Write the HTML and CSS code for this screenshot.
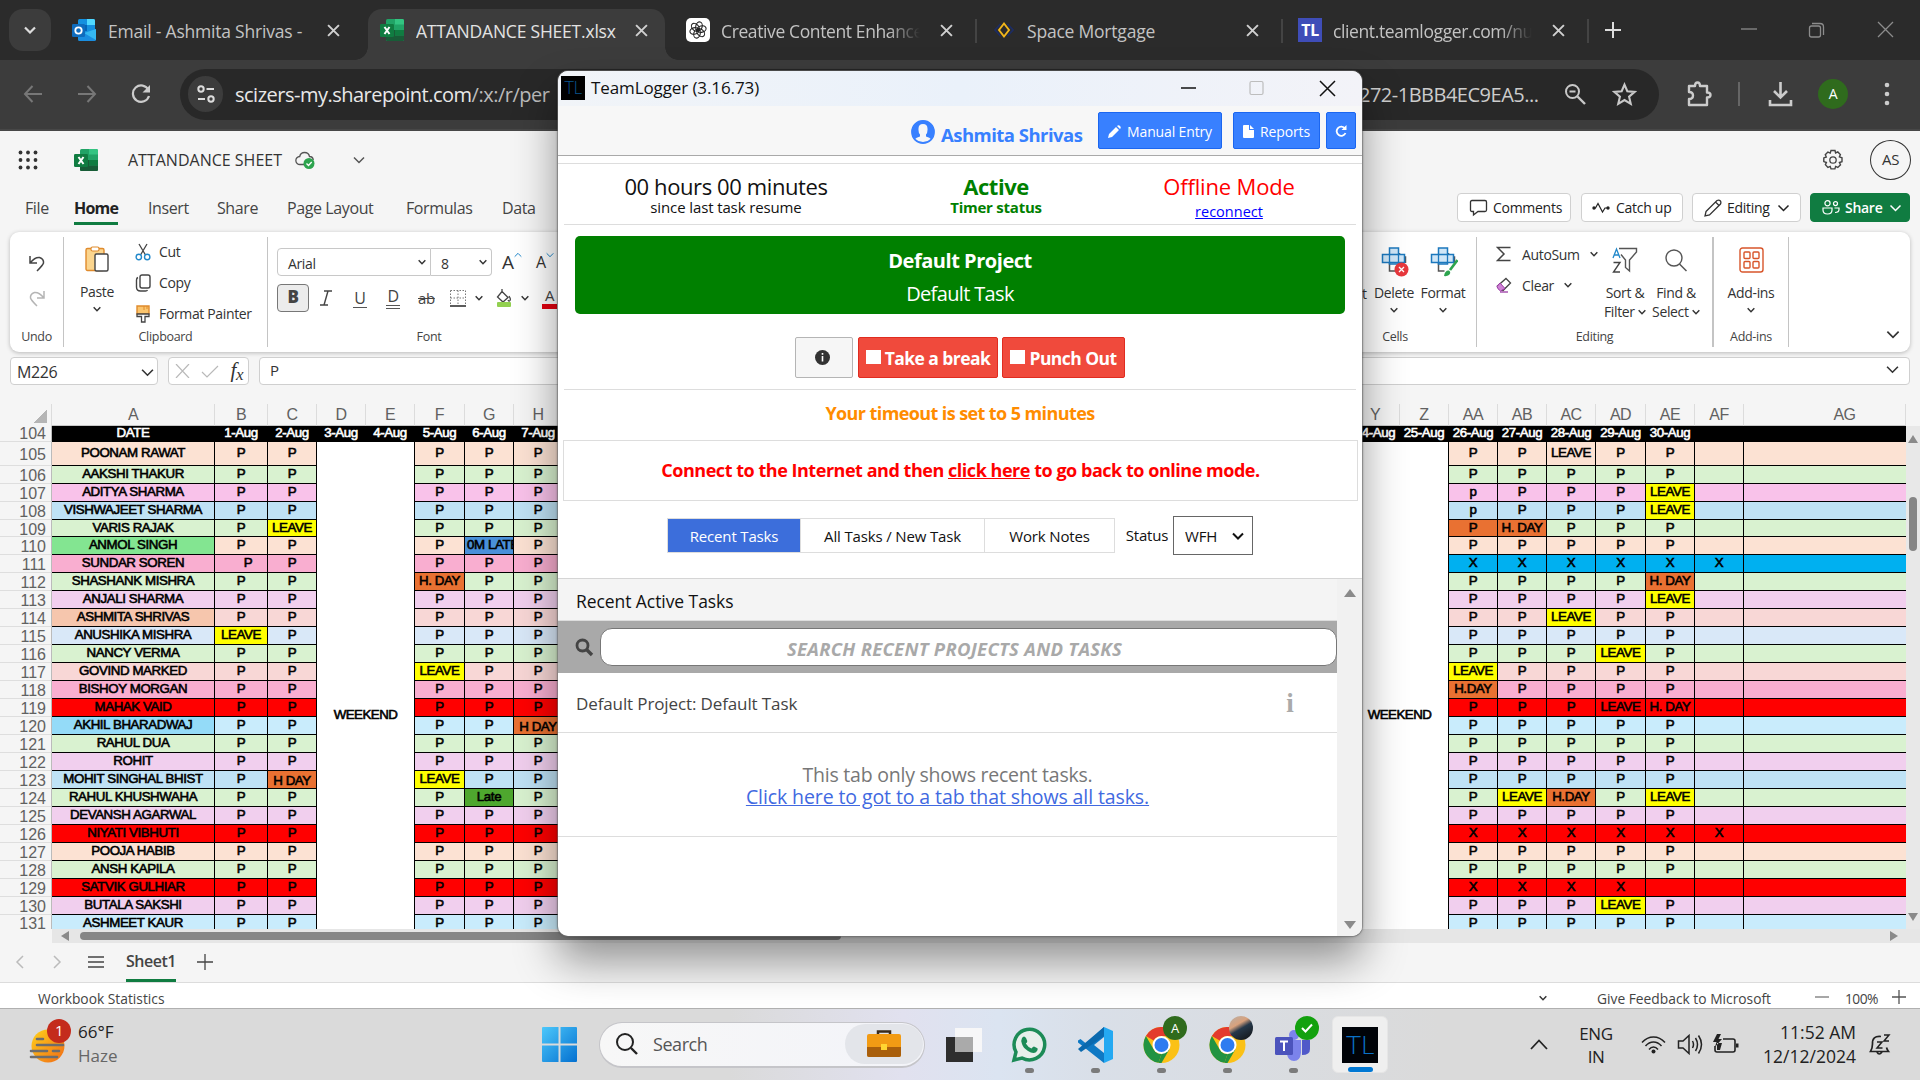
FILE: index.html
```html
<!DOCTYPE html>
<html lang="en">
<head>
<meta charset="utf-8">
<title>ATTANDANCE SHEET.xlsx</title>
<link rel="stylesheet" href="styles.css">
</head>
<body>
<svg class="defs" width="0" height="0">
  <symbol id="chev" viewBox="0 0 12 8"><path d="M1 1.500l5 5 5-5" fill="none" stroke="currentColor"/></symbol>
  <symbol id="x" viewBox="0 0 12 12"><path d="M1 1l10 10M11 1L1 11" fill="none" stroke="currentColor" stroke-width="1.800"/></symbol>
  <symbol id="excel" viewBox="0 0 24 22">
    <rect x="6" width="18" height="22" rx="1.500" fill="#21a366"/><path d="M6 11h9v11H7.500q-1.500 0-1.500-1.500z" fill="#185c37"/><path d="M15 11h9v5.500h-9z" fill="#107c41"/><path d="M15 16.500h9v4q0 1.500-1.500 1.500H15z" fill="#185c37"/><path d="M15 0h7.500Q24 0 24 1.500v4h-9z" fill="#33c481"/>
    <rect y="5" width="14" height="13" rx="1.300" fill="#107c41"/><path d="M4.500 8l5 7M9.500 8l-5 7" stroke="#fff" stroke-width="2"/>
  </symbol>
  <symbol id="chrome" viewBox="0 0 36 36">
    <circle cx="18" cy="18" r="18" fill="#fbc116"/><path d="M2.400 9A18 18 0 0 1 33.600 9H18a9 9 0 0 0-7.800 4.500z" fill="#e33b2e"/><path d="M2.400 9l7.800 13.500A9 9 0 0 0 18 27l-3 8.800A18 18 0 0 1 2.400 9z" fill="#229342"/><path d="M25.800 22.500L18 36q-2 0-3-.3l3-8.700z" fill="#229342"/>
    <circle cx="18" cy="18" r="9" fill="#fff"/><circle cx="18" cy="18" r="7" fill="#2f7cf0"/>
  </symbol>
  <symbol id="plusgrid" viewBox="0 0 26 28">
    <path d="M8 14v10h6M18 6v4h6v6" fill="none" stroke="#555" stroke-width="1.500"/>
    <path d="M8 1h9v6.500h6v8h-6V17H8v-1.500H1v-8h7z" fill="#cfe6f7" stroke="#1c78bd" stroke-width="1.500"/><path d="M8 7.500h9v8H8z" fill="none" stroke="#1c78bd" stroke-width="1.300"/>
  </symbol>
</svg>

<div class="screen">
  <header class="tabstrip">
    <span class="tabsearch"><svg width="12" height="8"><use href="#chev"/></svg></span>
    <div class="tab tab-mail">
      <svg class="fav" viewBox="0 0 24 22"><rect x="6" width="17" height="18" rx="1.500" fill="#1490df"/><path d="M15 0h6.500Q23 0 23 1.500V6h-8z" fill="#50d9ff"/><path d="M6 6h9v6H6z" fill="#0364b8"/><path d="M6 10l9 6 9-6v10.500q0 1.500-1.500 1.500h-15Q6 22 6 20.500z" fill="#1a8ee0"/><path d="M24 10v11L12 14z" fill="#35b8f1"/><rect y="5" width="13" height="13" rx="1.300" fill="#0f6cbd"/><circle cx="6.500" cy="11.500" r="3.200" fill="none" stroke="#fff" stroke-width="1.800"/></svg>
      <span class="tabtitle">Email - Ashmita Shrivas -</span><svg class="tx"><use href="#x"/></svg>
    </div>
    <div class="tab tab-active">
      <svg class="fav"><use href="#excel"/></svg>
      <span class="tabtitle">ATTANDANCE SHEET.xlsx</span><svg class="tx"><use href="#x"/></svg>
    </div>
    <div class="tab tab-gpt">
      <svg class="fav fav-sq" viewBox="0 0 24 24"><rect width="24" height="24" rx="5" fill="#fff"/><g fill="none" stroke="#222" stroke-width="1.100"><ellipse cx="12" cy="8.300" rx="3.200" ry="4.600" transform="rotate(15 12 12)"/><ellipse cx="12" cy="8.300" rx="3.200" ry="4.600" transform="rotate(75 12 12)"/><ellipse cx="12" cy="8.300" rx="3.200" ry="4.600" transform="rotate(135 12 12)"/><ellipse cx="12" cy="8.300" rx="3.200" ry="4.600" transform="rotate(195 12 12)"/><ellipse cx="12" cy="8.300" rx="3.200" ry="4.600" transform="rotate(255 12 12)"/><ellipse cx="12" cy="8.300" rx="3.200" ry="4.600" transform="rotate(315 12 12)"/></g></svg>
      <span class="tabtitle fade">Creative Content Enhance</span><svg class="tx"><use href="#x"/></svg>
    </div>
    <div class="tab tab-space">
      <svg class="fav fav-sq" viewBox="0 0 24 24"><path d="M8.500 6L3 12l5.500 6M15.500 6l5.500 6-5.500 6" fill="none" stroke="#1c2c63" stroke-width="1.800"/><path d="M12 5.500l5 6.500-5 6.500L7 12z" fill="none" stroke="#f2b61b" stroke-width="1.900"/></svg>
      <span class="tabtitle">Space Mortgage</span><svg class="tx"><use href="#x"/></svg>
    </div>
    <div class="tab tab-tl">
      <span class="tlfav">TL</span>
      <span class="tabtitle fade">client.teamlogger.com/nu</span><svg class="tx"><use href="#x"/></svg>
    </div>
    <svg class="newtab" viewBox="0 0 18 18"><path d="M9 1v16M1 9h16" stroke="#ddd" stroke-width="2"/></svg>
    <svg class="winctl" viewBox="0 0 160 20"><g fill="none" stroke="#8c8c8c" stroke-width="1.300"><path d="M2 9h16"/><rect x="70.500" y="6" width="11" height="11" rx="2"/><path d="M73 3.500h8q3.500 0 3.500 3.500v8"/><path d="M139 2l15 15M154 2l-15 15"/></g></svg>
  </header>

  <nav class="toolbar">
    <svg class="nav-ic dim" viewBox="0 0 20 20"><path d="M19 10H2M9.500 2L2 10l7.500 8" fill="none" stroke="currentColor" stroke-width="2"/></svg>
    <svg class="nav-ic dim" viewBox="0 0 20 20"><path d="M1 10h17M10.500 2L18 10l-7.500 8" fill="none" stroke="currentColor" stroke-width="2"/></svg>
    <svg class="nav-ic" viewBox="0 0 20 20"><path d="M17.500 6A8.200 8.200 0 1 0 18 12" fill="none" stroke="currentColor" stroke-width="2.200"/><path d="M19 1v7.500h-7.500z" fill="currentColor"/></svg>
    <div class="urlbar">
      <span class="tune"><svg width="20" height="20" viewBox="0 0 20 20"><g fill="none" stroke="#ddd" stroke-width="2"><circle cx="5" cy="5" r="2.700"/><path d="M10.500 5H18M2 15h7"/><circle cx="15" cy="15" r="2.700"/></g></svg></span>
      <span class="url-l">scizers-my.sharepoint.com<i>/:x:/r/per</i></span>
      <span class="url-r">272-1BBB4EC9EA5...</span>
      <svg class="u-zoom" viewBox="0 0 22 22"><g fill="none" stroke="#c8c8c8" stroke-width="2"><circle cx="8.500" cy="8.500" r="6.500"/><path d="M5.500 8.500h6"/><path d="M13.500 13.500L21 21" stroke-width="2.400"/></g></svg>
      <svg class="u-star" viewBox="0 0 24 24"><path d="M12 2.500l2.700 6.400 7 .6-5.300 4.600 1.600 6.900-6-3.700-6 3.700 1.600-6.900L2.300 9.500l7-.6z" fill="none" stroke="#c8c8c8" stroke-width="2"/></svg>
    </div>
    <svg class="t-ext" viewBox="0 0 26 26"><path d="M3 5h6q0-3.500 2.500-3.500T14 5h7v6.500q3.500 0 3.500 2.500T21 16.500V24H3v-6q4 0 4-3.500T3 11z" fill="none" stroke="#ccc" stroke-width="2.400" stroke-linejoin="round"/></svg>
    <span class="t-div"></span>
    <svg class="t-down" viewBox="0 0 24 26"><path d="M12 1v15M5.500 10l6.500 6.500 6.500-6.500M1.500 19v5h21v-5" fill="none" stroke="#ccc" stroke-width="2.600"/></svg>
    <span class="t-av">A</span>
    <svg class="t-dots" viewBox="0 0 6 24"><g fill="#ccc"><circle cx="3" cy="3" r="2.300"/><circle cx="3" cy="12" r="2.300"/><circle cx="3" cy="21" r="2.300"/></g></svg>
  </nav>

  <div class="titlerow">
    <svg class="waffle" viewBox="0 0 20 20"><g fill="#333"><circle cx="2.500" cy="2.500" r="1.900"/><circle cx="10" cy="2.500" r="1.900"/><circle cx="17.500" cy="2.500" r="1.900"/><circle cx="2.500" cy="10" r="1.900"/><circle cx="10" cy="10" r="1.900"/><circle cx="17.500" cy="10" r="1.900"/><circle cx="2.500" cy="17.500" r="1.900"/><circle cx="10" cy="17.500" r="1.900"/><circle cx="17.500" cy="17.500" r="1.900"/></g></svg>
    <svg class="xl"><use href="#excel"/></svg>
    <span class="docname">ATTANDANCE SHEET</span>
    <svg class="cloud" viewBox="0 0 20 18"><path d="M9 13.500H5a4 4 0 0 1-.300-8 5 5 0 0 1 9.800 0 4 4 0 0 1 3.800 3.500" fill="none" stroke="#555" stroke-width="1.300"/><circle cx="14" cy="12.500" r="5.500" fill="#2da44e"/><path d="M11.500 12.500l2 2 3.200-3.500" fill="none" stroke="#fff" stroke-width="1.300"/></svg>
    <svg class="doc-chev"><use href="#chev"/></svg>
    <svg class="gear" viewBox="0 0 22 22"><path d="M9 1.500h4l.6 2.400 2.200-1 2.600 2.700-1 2.200 2.600 1v3.900l-2.600.8 1.100 2.300-2.700 2.600-2.200-1-.7 2.500H9l-.8-2.500-2.300 1-2.500-2.700 1-2.200-2.600-.9V8.900l2.500-.9-1-2.300 2.600-2.600 2.300 1z" fill="none" stroke="#444" stroke-width="1.400"/><circle cx="11" cy="11" r="3.200" fill="none" stroke="#444" stroke-width="1.300"/></svg>
    <span class="as">AS</span>
  </div>

  <div class="menurow">
    <div class="menus"><span class="m-file">File</span><span class="m-home"><b>Home</b></span><span class="m-insert">Insert</span><span class="m-share">Share</span><span class="m-layout">Page Layout</span><span class="m-form">Formulas</span><span>Data</span></div>
    <div class="actions">
      <span class="btn b1"><svg width="19" height="18" viewBox="0 0 19 18"><path d="M3 1.500h13q1.500 0 1.500 1.500v8q0 1.500-1.500 1.500H9L4.500 16v-3.500H3Q1.500 12.500 1.500 11V3Q1.500 1.500 3 1.500z" fill="none" stroke="#333" stroke-width="1.300"/></svg>Comments</span>
      <span class="btn b2"><svg width="18" height="12" viewBox="0 0 18 12"><circle cx="2" cy="6" r="1.700" fill="#222"/><circle cx="16" cy="6" r="1.700" fill="#222"/><path d="M2 6h1.500L6 1.500 10.500 10 13 6h3" fill="none" stroke="#222" stroke-width="1.200"/></svg>Catch up</span>
      <span class="btn b3"><svg width="18" height="18" viewBox="0 0 18 18"><path d="M2 12.500L13 1.500q2-1 3.200.3t.3 3.200L5.500 16 1 17zM11.500 3L15 6.500" fill="none" stroke="#333" stroke-width="1.300"/></svg>Editing<svg width="13" height="8"><use href="#chev"/></svg></span>
      <span class="btn b4"><svg width="18" height="15" viewBox="0 0 18 15"><g fill="none" stroke="#fff" stroke-width="1.200"><circle cx="5.500" cy="3.200" r="2.600"/><path d="M1 8h9v2q0 4-4.500 4T1 10z"/><circle cx="13.500" cy="3.600" r="2"/><path d="M12.500 8H17v1.500q0 3-4 3"/></g></svg>Share<svg width="13" height="8"><use href="#chev"/></svg></span>
    </div>
  </div>

  <section class="ribbon">
    <div class="grp g-undo">
      <div class="body">
        <svg width="18" height="18" viewBox="0 0 18 18"><path d="M2 2v7h7M2.500 8.500Q7 3 11.500 3.500 16 5 15.500 9 15 11 9 17" fill="none" stroke="#444" stroke-width="1.500"/></svg>
        <svg width="18" height="18" viewBox="0 0 18 18"><path d="M16 2v7H9M15.500 8.500Q11 3 6.500 3.500 2 5 2.500 9 3 11 9 17" fill="none" stroke="#b5b5b5" stroke-width="1.500"/></svg>
      </div><label>Undo</label>
    </div>
    <div class="grp g-clip">
      <div class="body">
        <div class="big paste"><svg width="24" height="26" viewBox="0 0 24 26"><rect x="1" y="2.500" width="18" height="22" rx="1.500" fill="#fbd58e" stroke="#e08b2d" stroke-width="1.400"/><rect x="6" y="1" width="8" height="4" rx="1.500" fill="#fff" stroke="#e08b2d" stroke-width="1.200"/><rect x="10" y="8" width="13" height="17" rx="1.500" fill="#fff" stroke="#444" stroke-width="1.400"/></svg><span>Paste</span><svg class="c7"><use href="#chev"/></svg></div>
        <div class="stack">
          <span><svg width="16" height="18" viewBox="0 0 16 18"><path d="M4 1l6.500 11M12 1L5.500 12" stroke="#444" stroke-width="1.300"/><circle cx="3.800" cy="14" r="2.700" fill="none" stroke="#2188ca" stroke-width="1.400"/><circle cx="12.200" cy="14" r="2.700" fill="none" stroke="#2188ca" stroke-width="1.400"/></svg>Cut</span>
          <span><svg width="16" height="18" viewBox="0 0 16 18"><rect x="5" y="1" width="10" height="13" rx="2" fill="none" stroke="#444" stroke-width="1.400"/><path d="M3 3.500Q1.500 4 1.500 6v7q0 4 4 4h5q1.500 0 2-1" fill="none" stroke="#444" stroke-width="1.400"/></svg>Copy</span>
          <span><svg width="16" height="18" viewBox="0 0 16 18"><path d="M2 1h12v8H2z" fill="#fbc56d" stroke="#e08b2d" stroke-width="1.400"/><path d="M9 1v4M12 1v3" stroke="#e08b2d"/><path d="M2 9h12v2.500h-4V17H6.500v-5.500H2z" fill="#fff" stroke="#444" stroke-width="1.300"/></svg>Format Painter</span>
        </div>
      </div><label>Clipboard</label>
    </div>
    <div class="grp g-font">
      <div class="body fontbody">
        <div class="fr1"><span class="cb cb1">Arial<svg class="c7"><use href="#chev"/></svg></span><span class="cb cb2">8<svg class="c7"><use href="#chev"/></svg></span><span class="ag">A<svg width="8" height="6"><use href="#chev" color="#2188ca"/></svg></span><span class="as2">A<svg width="8" height="6"><use href="#chev" color="#2188ca"/></svg></span></div>
        <div class="fr2">
          <span class="bold">B</span>
          <svg class="it" width="14" height="16" viewBox="0 0 14 16"><path d="M5 1h8M1 15h8M9 1L5 15" stroke="#444" stroke-width="1.400"/></svg>
          <span class="un">U</span><span class="du">D</span><span class="st">ab</span>
          <svg class="bd" width="16" height="17" viewBox="0 0 16 17"><path d="M.5 .5h15M.5 8h15M.5 .5v15M8 .5v15M15.500 .5v15" fill="none" stroke="#777" stroke-dasharray="1.500 1.500"/><path d="M0 16h16" stroke="#333" stroke-width="1.600"/></svg><svg class="c7 m1"><use href="#chev"/></svg>
          <svg class="fl" width="16" height="18" viewBox="0 0 16 18"><path d="M6 2.500l6 6-5 4.500L1.500 8zM6 2.500V0M13 7q2 3 1 4.500t-2-.5" fill="none" stroke="#444" stroke-width="1.300"/><rect x="1" y="13" width="14" height="5" rx="1" fill="#92d050"/></svg><svg class="c7 m2"><use href="#chev"/></svg>
          <span class="fc">A</span>
        </div>
      </div><label>Font</label>
    </div>
    <div class="grp g-cells">
      <div class="body">
        <span class="insert-t">t</span>
        <div class="big delete"><span class="ov"><svg width="27" height="28"><use href="#plusgrid"/></svg><svg class="badge" width="15" height="15" viewBox="0 0 15 15"><circle cx="7.500" cy="7.500" r="7" fill="#e8383d"/><path d="M5 5l5 5M10 5l-5 5" stroke="#fff" stroke-width="1.300"/></svg></span><span>Delete</span><svg class="c7"><use href="#chev"/></svg></div>
        <div class="big format"><span class="ov"><svg width="27" height="28"><use href="#plusgrid"/></svg><svg class="badge" width="15" height="18" viewBox="0 0 15 18"><path d="M14.500 1L7 11" stroke="#2da44e" stroke-width="2.600"/><path d="M1 17q1-6 5-5.500 2.500 2 0 4.500-2 1.500-5 1z" fill="#2da44e"/></svg></span><span>Format</span><svg class="c7"><use href="#chev"/></svg></div>
      </div><label>Cells</label>
    </div>
    <div class="grp g-edit">
      <div class="body">
        <div class="stack2">
          <span><svg width="16" height="16" viewBox="0 0 16 16"><path d="M14.500 1.500h-13L8 8l-6.500 6.500h13" fill="none" stroke="#444" stroke-width="1.500"/></svg>AutoSum<svg class="c7"><use href="#chev"/></svg></span>
          <span><svg width="16" height="16" viewBox="0 0 16 16"><path d="M10 1.500l4.500 4.500L7 13.500 1.500 9z" fill="#fff" stroke="#444" stroke-width="1.300"/><path d="M4 6L1 9.500q0 2 3.500 4.500L9 11.500z" fill="#cf82d6" stroke="#9b3ba5"/><path d="M4 15h8" stroke="#9b3ba5" stroke-width="1.300"/></svg>Clear<svg class="c7"><use href="#chev"/></svg></span>
        </div>
        <div class="big sort"><svg width="26" height="26" viewBox="0 0 26 26"><path d="M1 11L4.500 2 8 11M2.200 8h4.600" fill="none" stroke="#2188ca" stroke-width="1.300"/><path d="M1.500 15.500H8L1.500 25H8" fill="none" stroke="#444" stroke-width="1.400"/><path d="M7 1.500h17.500V5L17.500 13v11l-4-3.500V13L9 7.500" fill="none" stroke="#555" stroke-width="1.400"/></svg><span>Sort &amp;<br>Filter <svg class="c7"><use href="#chev"/></svg></span></div>
        <div class="big find"><svg width="24" height="26" viewBox="0 0 24 26"><circle cx="10" cy="11" r="8" fill="none" stroke="#555" stroke-width="1.400"/><path d="M15.500 17l7 7" stroke="#555" stroke-width="1.500"/></svg><span>Find &amp;<br>Select <svg class="c7"><use href="#chev"/></svg></span></div>
      </div><label>Editing</label>
    </div>
    <div class="grp g-add">
      <div class="body"><div class="big addins"><svg width="25" height="26" viewBox="0 0 25 26"><g fill="none" stroke="#d8562b" stroke-width="1.400"><rect x="1" y="1" width="23" height="24" rx="2.500"/><rect x="5" y="5" width="6" height="6.500" rx="1"/><rect x="14" y="5" width="6" height="6.500" rx="1"/><rect x="5" y="14.500" width="6" height="6.500" rx="1"/><rect x="14" y="14.500" width="6" height="6.500" rx="1"/></g></svg><span>Add-ins</span><svg class="c7"><use href="#chev"/></svg></div></div><label>Add-ins</label>
    </div>
    <svg class="collapse"><use href="#chev"/></svg>
  </section>

  <div class="fbar">
    <span class="namebox">M226<svg width="13" height="9"><use href="#chev"/></svg></span>
    <span class="fxbox"><svg width="15" height="14" viewBox="0 0 15 14"><path d="M1 0l13 14M14 0L1 14" stroke="#b9b9b9" stroke-width="1.200"/></svg><svg width="18" height="13" viewBox="0 0 18 13"><path d="M1 7l5 5L17 1" fill="none" stroke="#b9b9b9" stroke-width="1.200"/></svg><i>f<sub>x</sub></i></span>
    <span class="formula">P<svg width="13" height="9"><use href="#chev"/></svg></span>
  </div>

  <main class="sheet" id="sheet"></main>
  <div class="hscroll"><i class="tri-l"></i><span class="thumb"></span><i class="tri-r"></i></div>

  <div class="sheettabs">
    <svg width="9" height="14" viewBox="0 0 9 14"><path d="M8 1L2 7l6 6" fill="none" stroke="#bbb" stroke-width="1.500"/></svg>
    <svg class="sr" width="9" height="14" viewBox="0 0 9 14"><path d="M1 1l6 6-6 6" fill="none" stroke="#bbb" stroke-width="1.500"/></svg>
    <svg width="16" height="12" viewBox="0 0 16 12"><path d="M0 1h16M0 6h16M0 11h16" stroke="#444" stroke-width="1.300"/></svg>
    <b>Sheet1</b>
    <svg width="16" height="16" viewBox="0 0 16 16"><path d="M8 0v16M0 8h16" stroke="#444" stroke-width="1.300"/></svg>
  </div>
  <div class="status"><span class="ws">Workbook Statistics</span><svg class="c7"><use href="#chev"/></svg><span class="gf">Give Feedback to Microsoft</span><svg class="zm" width="14" height="14" viewBox="0 0 14 14"><path d="M0 7h14" stroke="#777" stroke-width="1.300"/></svg><span class="pc">100%</span><svg width="14" height="14" viewBox="0 0 14 14"><path d="M0 7h14M7 0v14" stroke="#555" stroke-width="1.300"/></svg></div>

  <footer class="taskbar">
    <div class="weather">
      <svg width="42" height="44" viewBox="0 0 42 44"><defs><linearGradient id="sun" x1="0" y1="0" x2="1" y2="1"><stop offset="0" stop-color="#ffd21a"/><stop offset="1" stop-color="#f06a16"/></linearGradient></defs><circle cx="20" cy="27" r="16.500" fill="url(#sun)"/><path d="M9 20h6M9 26h26M3 32h16M25 32h6M3 38h26" stroke="#6d6d6d" stroke-width="2.600" stroke-linecap="round"/></svg>
      <span class="count">1</span>
      <div class="wt">66°F<br><em>Haze</em></div>
    </div>
    <svg class="start" viewBox="0 0 35 35"><defs><linearGradient id="w" x1="0" y1="0" x2="1" y2="1"><stop offset="0" stop-color="#4cc8fb"/><stop offset="1" stop-color="#0470d0"/></linearGradient></defs><path d="M0 1q0-1 1-1h15.500v16.500H0zM18.500 0H34q1 0 1 1v15.500H18.500zM0 18.500h16.500V35H1q-1 0-1-1zM18.500 18.500H35V34q0 1-1 1H18.500z" fill="url(#w)"/></svg>
    <div class="search">
      <svg width="24" height="24" viewBox="0 0 24 24"><circle cx="10" cy="10" r="8" fill="none" stroke="#222" stroke-width="2"/><path d="M16 16l6 6" stroke="#222" stroke-width="2.400"/></svg>
      <span>Search</span>
      <span class="brief"><svg width="36" height="28" viewBox="0 0 36 28"><path d="M12 5V1.500h12V5" fill="none" stroke="#3a2b1c" stroke-width="2.500"/><rect x="1" y="4" width="34" height="23" rx="2" fill="#f29b14"/><path d="M1 17h34v8q0 2-2 2H3q-2 0-2-2z" fill="#a95f0c"/><rect x="15" y="14" width="6" height="6" fill="#ffd532"/></svg></span>
    </div>
    <svg class="tview" viewBox="0 0 36 34"><rect x="0" y="9" width="27" height="25" fill="#2e2e2e"/><rect x="9" y="0" width="27" height="24" fill="#f8f8f8" opacity=".95"/><rect x="9" y="9" width="18" height="15" fill="#aaa"/></svg>
    <span class="app"><svg width="36" height="36" viewBox="0 0 36 36"><path d="M3 33l2-8A15.300 15.300 0 1 1 11 31z" fill="#e7efeb" stroke="#1c8b57" stroke-width="3.500"/><path d="M11 11q2-3 4 0l1.300 3q0 1.500-1.500 2.500 2 3.500 5.700 5 1.500-2 2.500-2l3.500 1.700q1 2-1.500 4-3 2-8-1.200T11 17q-1.500-3.500 0-6z" fill="#1c8b57"/></svg></span>
    <span class="app"><svg width="37" height="36" viewBox="0 0 37 36"><path d="M27 0l-18 16.500L3.500 12 1 13.500v2L27 36z" fill="#0f79c4"/><path d="M1 22l26-22v9L4 25z" fill="#0a69ae"/><path d="M27 0l9 4v28l-9 4z" fill="#24a9f2"/><path d="M27 10v16l-10-8z" fill="#dbe1ea"/></svg></span>
    <span class="app"><svg width="37" height="36"><use href="#chrome"/></svg><span class="pb pa">A</span></span>
    <span class="app"><svg width="37" height="36"><use href="#chrome"/></svg><span class="pb pp"></span></span>
    <span class="app"><svg width="36" height="32" viewBox="0 0 36 32"><circle cx="19" cy="6" r="5" fill="#7b83eb"/><path d="M12 11h14v13q-1 8-7 8t-7-7z" fill="#7b83eb"/><path d="M27 11h8v9q0 6-8 6z" fill="#5059c9"/><rect y="8" width="18" height="18" rx="1.500" fill="#4b53bc"/><path d="M5 12.500h8M9 12.500V22" stroke="#fff" stroke-width="2"/></svg><span class="pb pk"><svg width="12" height="10" viewBox="0 0 12 10"><path d="M1 5l3.500 3.500L11 1.500" fill="none" stroke="#fff" stroke-width="2"/></svg></span></span>
    <span class="app tlapp"><b>TL</b></span>
    <svg class="trayc" width="18" height="11" viewBox="0 0 18 11"><path d="M1 10l8-8.500 8 8.500" fill="none" stroke="#222" stroke-width="1.800"/></svg>
    <div class="lang">ENG<br>IN</div>
    <svg class="wifi" width="25" height="19" viewBox="0 0 25 19"><g fill="none" stroke="#222" stroke-width="1.500"><path d="M1 7.500Q6 2 12.500 2T24 7.500M4.500 11q3.500-4 8-4t8 4M8 14.500Q10 12 12.500 12t4.500 2.500"/></g><circle cx="12.500" cy="16.500" r="2" fill="#222"/></svg>
    <svg class="vol" width="26" height="21" viewBox="0 0 26 21"><g fill="none" stroke="#222" stroke-width="1.500"><path d="M1.500 7H6l6-5.500v18L6 14H1.500z"/><path d="M15.500 7q2 3.500 0 7M18.500 4q4 6.500 0 13M21.500 1.500q6 9 0 18"/></g></svg>
    <svg class="bat" width="26" height="21" viewBox="0 0 26 21"><path d="M10 5h10q2 0 2 2v9q0 2-2 2H4q-2 0-2-2v-4" fill="none" stroke="#222" stroke-width="1.600"/><path d="M4 0L0 8h3.500L2 13l7-8H5.500L8 0zM4 16V9h5l-2 7zM23 9.500h2.500v4H23z" fill="#222"/></svg>
    <div class="clock">11:52 AM<br>12/12/2024</div>
    <svg class="bell" width="22" height="24" viewBox="0 0 22 24"><path d="M12 3.500Q3 2.500 3.500 11q0 4-2 7.500h18q-1.500-2-2-4M8 19q2 4 5 0" fill="none" stroke="#222" stroke-width="1.700"/><path d="M8 9h5l-5 6h5.500M15 2h5l-5 6h5" fill="none" stroke="#222" stroke-width="1.500"/></svg>
  </footer>
</div>

<div class="shade"></div>
<section class="win">
  <div class="w-title"><span class="w-ic">TL</span><span class="w-name">TeamLogger (3.16.73)</span>
    <svg width="160" height="20" viewBox="0 0 160 20"><g fill="none"><path d="M1 10h15" stroke="#111" stroke-width="1.300"/><rect x="70" y="3.500" width="13" height="13" rx="1.500" stroke="#bdbdbd" stroke-width="1.200"/><path d="M140 3l15 15M155 3l-15 15" stroke="#111" stroke-width="1.500"/></g></svg></div>
  <div class="w-head">
    <svg width="24" height="24" viewBox="0 0 24 24"><circle cx="12" cy="12" r="11" fill="none" stroke="#3880ff" stroke-width="1.800"/><path d="M4 19q1-1.500 5-2.500v-2Q7.500 13 7.500 10 7 4 12 4t4.500 6q0 3-1.500 4.500v2q4 1 5 2.500A11 11 0 1 0 4 19z" fill="#3880ff"/></svg>
    <b>Ashmita Shrivas</b>
    <span class="wb wb1"><svg width="13" height="13" viewBox="0 0 13 13"><path d="M0 13l1-4L8 2l3 3-7 7zM9 1q1.500-1.500 3 0t0 3z" fill="#fff"/></svg>Manual Entry</span>
    <span class="wb wb2"><svg width="11" height="13" viewBox="0 0 11 13"><path d="M0 1q0-1 1-1h5v5h5v7q0 1-1 1H1q-1 0-1-1zM7 0l4 4H7z" fill="#fff"/></svg>Reports</span>
    <span class="wb wb3"><svg width="12" height="12" viewBox="0 0 12 12"><path d="M10 3.500A4.600 4.600 0 1 0 10.500 8" fill="none" stroke="#fff" stroke-width="1.800"/><path d="M11.500 0v5h-5z" fill="#fff"/></svg></span>
  </div>
  <div class="w-gap"></div>
  <div class="w-stats">
    <div class="s1"><p>00 hours 00 minutes</p><small>since last task resume</small></div>
    <div class="s2"><p>Active</p><small>Timer status</small></div>
    <div class="s3"><p>Offline Mode</p><small class="rec">reconnect</small></div>
  </div>
  <div class="w-proj"><b>Default Project</b><span>Default Task</span></div>
  <div class="w-btns">
    <span class="info"><svg width="15" height="15" viewBox="0 0 15 15"><circle cx="7.500" cy="7.500" r="7.500" fill="#333"/><path d="M7.500 6v5.500M7.500 3v1.700" stroke="#fff" stroke-width="1.600"/></svg></span>
    <span class="red r1"><i></i>Take a break</span><span class="red r2"><i></i>Punch Out</span>
  </div>
  <div class="w-timeout">Your timeout is set to 5 minutes</div>
  <div class="w-conn"><span>Connect to the Internet and then <u>click here</u> to go back to online mode.</span></div>
  <div class="w-tabs"><span class="k1">Recent Tasks</span><span class="k2">All Tasks / New Task</span><span class="k3">Work Notes</span><span class="k4">Status</span><span class="k5">WFH<svg width="12" height="8"><use href="#chev"/></svg></span></div>
  <div class="w-list">
    <div class="w-main">
      <div class="w-h">Recent Active Tasks</div>
      <div class="w-search"><svg width="19" height="19" viewBox="0 0 19 19"><circle cx="7.500" cy="7.500" r="5.500" fill="none" stroke="#444" stroke-width="2.800"/><path d="M11.500 11.500l5.500 5.500" stroke="#444" stroke-width="3.400"/></svg><span>SEARCH RECENT PROJECTS AND TASKS</span></div>
      <div class="w-row"><span>Default Project: Default Task</span><i>i</i></div>
      <div class="w-note"><span>This tab only shows recent tasks.</span><u>Click here to got to a tab that shows all tasks.</u></div>
    </div>
    <div class="w-scroll"><i class="tri-u"></i><i class="tri-d"></i></div>
  </div>
</section>
<script src="sheet.js"></script>
</body>
</html>
```
FILE: styles.css
```css
* { box-sizing: border-box; letter-spacing: -0.025em; }
body { margin: 0; width: 1920px; height: 1080px; overflow: hidden; position: relative; font-family: "Open Sans", "Noto Sans", sans-serif; color: #222; background: #f5f5f5; }
.defs { position: absolute; }
svg { flex: none; display: block; }
i, em { font-style: normal; }
#chev path { stroke-width: var(--sw, 1.500); }
.screen { display: flex; flex-direction: column; height: 1080px; }

/* browser chrome */
.tabstrip { height: 60px; background: #2b2b2b; display: flex; align-items: center; padding-left: 9px; flex: none; color: #c3c3c3; font-size: 17.5px; }
.tabsearch { width: 42px; height: 42px; border-radius: 14px; background: #3c3c3c; color: #ddd; display: flex; align-items: center; justify-content: center; --sw: 2.200; }
.tab { height: 51px; margin-top: 9px; padding-bottom: 9px; display: flex; align-items: center; position: relative; white-space: nowrap; background: linear-gradient(#444, #444) no-repeat 310px 10px / 0 24px; }
.tab-mail { width: 317px; padding-left: 21px; }
.tab-active { width: 297px; padding-left: 12px; background: #3c3c3c; border-radius: 14px 14px 0 0; color: #e3e3e3; }
.tab-active::before, .tab-active::after { content: ""; position: absolute; bottom: 0; width: 13px; height: 13px; }
.tab-active::before { left: -13px; background: radial-gradient(circle at 0 0, transparent 12.500px, #3c3c3c 13px); }
.tab-active::after { right: -13px; background: radial-gradient(circle at 100% 0, transparent 12.500px, #3c3c3c 13px); }
.tab-gpt { width: 327px; padding-left: 21px; background-size: 2px 24px; }
.tab-space { width: 306px; background-position: 289px 10px; background-size: 2px 24px; }
.tab-tl { width: 306px; background-position: 289px 10px; background-size: 2px 24px; }
.fav { width: 24px; height: 22px; margin-right: 12px; }
.fav-sq { height: 24px; margin-right: 11px; }
.tabtitle { width: 218px; overflow: hidden; padding-top: 2px; letter-spacing: -0.012em; }
.tab-gpt .tabtitle, .tab-tl .tabtitle { width: 199px; margin-right: 19px; }
.fade { letter-spacing: -0.022em; -webkit-mask-image: linear-gradient(90deg, #000 84%, transparent); }
.tx { width: 13px; height: 13px; color: #d0d0d0; margin-left: 1px; }
.tlfav { width: 24px; height: 24px; margin-right: 11px; background: #3f4db8; color: #fff; font: 700 16px/24px "Noto Sans", sans-serif; text-align: center; }
.newtab { width: 18px; height: 18px; }
.winctl { width: 160px; height: 20px; margin-left: 117px; }
.toolbar { height: 71px; flex: none; background: #3c3c3c; border-bottom: 2px solid #474747; display: flex; align-items: center; padding: 0 0 1px 23px; color: #ccc; }
.nav-ic { width: 20px; height: 20px; margin-right: 34px; }
.nav-ic.dim { color: #777; }
.nav-ic:nth-child(3) { margin-right: 29px; }
.urlbar { width: 1479px; height: 51px; border-radius: 26px; background: #282828; display: flex; align-items: center; padding-left: 8px; font-size: 20px; color: #e8e8e8; }
.tune { width: 35px; height: 36px; border-radius: 18px; background: #3c3c3c; display: flex; align-items: center; justify-content: center; margin-right: 12px; }
.url-l { width: 1124px; white-space: nowrap; }
.url-l i { color: #bbb; }
.url-r { width: 201px; white-space: nowrap; color: #ccc; }
.u-zoom { width: 22px; height: 22px; margin-left: 4px; margin-right: 26px; }
.u-star { width: 25px; height: 25px; }
.t-ext { width: 26px; height: 26px; margin-left: 27px; }
.t-div { width: 2px; height: 24px; background: #666; margin: 0 28px 0 26px; }
.t-down { width: 25px; height: 26px; }
.t-av { width: 30px; height: 30px; border-radius: 50%; background: #2f6b1d; color: #fff; font-size: 14px; line-height: 30px; text-align: center; margin: 0 36px 0 25px; }
.t-dots { width: 6px; height: 24px; }

/* workbook header */
.titlerow { height: 58px; flex: none; display: flex; align-items: center; padding-left: 18px; font-size: 16px; color: #333; }
.waffle { width: 20px; height: 20px; margin-right: 36px; }
.xl { width: 24px; height: 22px; margin-right: 30px; }
.docname { width: 167px; white-space: nowrap; letter-spacing: 0; }
.cloud { width: 20px; height: 18px; }
.doc-chev { width: 12px; height: 8px; margin-left: 38px; color: #555; }
.gear { width: 22px; height: 22px; margin-left: 1457px; }
.as { width: 41px; height: 40px; border: 1.500px solid #333; border-radius: 50%; text-align: center; line-height: 37px; margin-left: 26px; font-size: 15px; }
.menurow { height: 43px; flex: none; display: flex; justify-content: space-between; padding: 4px 10px 0 25px; }
.menus { display: flex; font-size: 16px; color: #444; line-height: 30px; white-space: nowrap; }
.menus b { display: inline-block; height: 32px; border-bottom: 3px solid #107c41; color: #222; letter-spacing: -0.050em; }
.m-file { width: 49px; } .m-home { width: 74px; } .m-insert { width: 69px; } .m-share { width: 70px; } .m-layout { width: 119px; } .m-form { width: 96px; }
.actions { display: flex; }
.btn { height: 29px; border: 1px solid #d0d0d0; border-radius: 4px; background: #fff; display: flex; align-items: center; gap: 5px; padding-left: 11px; font-size: 14px; letter-spacing: -0.020em; white-space: nowrap; }
.btn svg:last-child:not(:first-child) { margin-left: 2px; }
.b1 { width: 114px; margin-right: 10px; }
.b2 { width: 102px; margin-right: 9px; padding-left: 10px; gap: 6px; }
.b3 { width: 109px; margin-right: 9px; }
.b4 { width: 100px; background: #107c41; color: #fff; border-color: #107c41; font-weight: 600; }

/* ribbon */
.ribbon { height: 120px; flex: none; margin: 0 10px; background: #fff; border-radius: 9px; box-shadow: 0 1px 4px rgba(0,0,0,.25); display: flex; padding: 5px 0; font-size: 14px; color: #333; }
.grp { height: 110px; border-right: 1.500px solid #c4c4c4; display: flex; flex-direction: column; }
.grp label { height: 20px; line-height: 20px; font-size: 12.500px; text-align: center; color: #444; }
.body { height: 90px; display: flex; }
.c7 { width: 8px; height: 6px; color: #333; --sw: 2.200; }
.g-undo { width: 54px; }
.g-undo .body { flex-direction: column; align-items: center; padding-top: 17px; gap: 17px; }
.g-clip { width: 204px; }
.big { display: flex; flex-direction: column; align-items: center; text-align: center; line-height: 19px; white-space: nowrap; }
.paste { width: 66px; padding-top: 9px; }
.paste span { margin: 10px 0 5px; }
.stack { display: flex; flex-direction: column; padding: 5px 0 0 5px; }
.stack > span { height: 31px; display: flex; align-items: center; padding-bottom: 12px; gap: 8px; white-space: nowrap; }
.g-font { width: 1094px; border: 0; }
.g-font label { width: 322px; }
.fontbody { flex-direction: column; padding: 11px 0 0 9px; }
.fr1, .fr2 { display: flex; align-items: center; }
.cb { height: 28px; border: 1px solid #c8c8c8; display: flex; align-items: center; justify-content: space-between; padding: 3px 4px 0 10px; line-height: 18px; }
.cb svg { margin-top: -3px; }
.cb1 { width: 154px; border-radius: 4px 0 0 4px; }
.cb2 { width: 61px; border-radius: 0 4px 4px 0; border-left: 0; margin-right: 10px; }
.ag, .as2 { display: flex; font-size: 19px; line-height: 26px; width: 34px; }
.ag svg, .as2 svg { margin-top: 3px; }
.ag svg { transform: rotate(180deg); }
.as2 { font-size: 16px; }
.fr2 { padding-top: 8px; font-size: 18px; line-height: 24px; color: #444; }
.bold { width: 32px; height: 28px; border: 1.500px solid #777; border-radius: 4px; background: #ececec; font-weight: 800; font-size: 17px; text-align: center; margin-right: 10px; }
.it { margin-right: 20px; }
.un { width: 14px; margin-right: 19px; text-align: center; border-bottom: 1.500px solid #555; line-height: 18px; font-size: 16px; }
.du { width: 14px; margin-right: 18px; text-align: center; border-bottom: 4px double #555; line-height: 17px; font-size: 16px; }
.st { text-decoration: line-through; font-size: 15px; width: 32px; }
.m1 { margin: 0 13px 0 9px; }
.m2 { margin: 0 13px 0 9px; }
.fc { width: 15px; text-align: center; border-bottom: 5px solid #e3000f; line-height: 17px; font-size: 15px; }
.g-cells { width: 115px; border-right: 1.500px solid #c4c4c4; }
.g-cells label { width: 66px; }
.insert-t { width: 8px; padding-top: 47px; }
.g-cells .big, .g-edit .big, .addins { padding-top: 10px; }
.delete { width: 48px; }
.format { width: 50px; }
.g-cells .big > span:nth-child(2) { margin: 8px 0 5px; }
.addins { width: 100%; }
.addins span { margin: 10px 0 5px; }
.ov { position: relative; }
.badge { position: absolute; left: 13px; bottom: -2px; }
.g-edit { width: 237px; border-right-width: 2px; }
.stack2 { width: 122px; padding: 4px 0 0 19px; }
.stack2 > span { height: 26px; display: flex; align-items: center; gap: 10px; margin-bottom: 5px; white-space: nowrap; }
.sort { width: 52px; }
.find { width: 50px; }
.g-edit .big > span:last-child { margin-top: 10px; }
.g-edit .big .c7 { display: inline-block; vertical-align: 2px; }
.g-add { width: 75px; }
.collapse { width: 14px; height: 9px; margin: 93px 0 0 97px; }

/* formula bar */
.fbar { height: 28px; flex: none; margin: 5px 10px 0; display: flex; color: #333; }
.fbar > span { border: 1px solid #cfcfcf; border-radius: 4px; background: #fff; display: flex; align-items: center; justify-content: space-between; }
.namebox { width: 148px; padding: 2px 3px 0 6px; margin-right: 10px; font-size: 16px; }
.fxbox { width: 81px; padding: 0 5px 0 6px; margin-right: 10px; }
.fxbox i { font: italic 21px/22px "Liberation Serif", serif; }
.fxbox sub { font-size: 17px; line-height: 17px; vertical-align: -3px; }
.formula { width: 1651px; padding: 0 10px 3px 10px; font-size: 15px; }

/* grid */
.sheet { flex: none; margin-top: 19px; display: grid; height: 525px; overflow: hidden; grid-template-columns: 52px 163px 53px 49px 49px 49px 50px 49px 49px 788px 49px 49px 49px 49px 49px 50px 49px 49px 162px 14px; grid-template-rows: 22px 16px 24px 18px 18px 18px 17px repeat(21, 18px) 14px; }
.col, .num { font: 16px "Liberation Sans", sans-serif; color: #616161; }
.col { border-right: 1px solid #dcdcdc; border-bottom: 1px solid #c8c8c8; text-align: center; line-height: 21px; letter-spacing: -0.5px; }
.col:nth-of-type(19) { padding-left: 40px; }
.corner { border-right: 1px solid #dcdcdc; background: linear-gradient(135deg, transparent 50%, #b5b5b5 50%) no-repeat 33px 5px / 14px 14px; }
.num { border-bottom: 1px solid #dedede; border-right: 1px solid #bbb; text-align: right; padding-right: 5px; line-height: 19px; letter-spacing: 0; }
.num.first { line-height: 16px; }
.num.tall { line-height: 25px; }
.num.last { line-height: 18px; border-bottom: 0; }
.cell { border-right: 1px solid #000; border-bottom: 1px solid #000; font: 13.300px/15px "Liberation Sans", sans-serif; -webkit-text-stroke: .6px currentColor; letter-spacing: -0.4px; color: #000; text-align: center; overflow: hidden; white-space: nowrap; }
.cell.tall { line-height: 21px; }
.cell.low { line-height: 19px; }
.cell.last { border-bottom: 0; }
.cell.head { background: #000; color: #fff; line-height: 13px; }
.cell.noedge { border-right: 0; }
.cell.left { text-align: left; padding-left: 2px; }
.cell.shift { padding-left: 14px; }
.weekend { grid-row: 3 / 30; background: #fff; border-right: 1px solid #000; font: 13.300px/16px "Liberation Sans", sans-serif; letter-spacing: -0.5px; -webkit-text-stroke: .6px currentColor; color: #000; text-align: center; padding-top: 265px; }
.weekend.first { grid-column: 5 / 7; }
.weekend.second { grid-column: 11 / 13; }
.peach { background: #fce2d3; } .green { background: #d9f2d0; } .pink { background: #f9c2ea; } .blue { background: #bfe2f5; }
.rose { background: #f9aed0; } .lilac { background: #f1cfee; } .blush { background: #f8d7d6; } .ice { background: #d9e8f8; }
.red-c { background: #f00; } .sky { background: #c9ecfc; } .mint { background: #83e591; } .apricot { background: #f6c6ad; }
.azure { background: #94dbf8; } .cyan { background: #00b0f0; } .yellow { background: #ff0; } .orange { background: #e97132; }
.royal { background: #4a90d9; } .leaf { background: #4ea72e; }
.vscroll { grid-row: 2 / 30; grid-column: 20; background: #e8e8e8; display: flex; flex-direction: column; align-items: center; padding-top: 9px; }
.vscroll span { width: 8px; height: 54px; border-radius: 4px; background: #868686; margin: 54px 0 362px; }
.tri-u, .tri-d { border: 5px solid transparent; border-top: 0; border-bottom: 8px solid #8a8a8a; }
.tri-d { border-bottom: 0; border-top: 8px solid #8a8a8a; }
.hscroll { height: 14px; flex: none; margin-left: 52px; background: #e6e6e6; display: flex; align-items: center; padding: 0 22px 0 9px; }
.tri-l, .tri-r { border: 5px solid transparent; border-left: 0; border-right: 8px solid #8a8a8a; }
.tri-r { border-right: 0; border-left: 8px solid #8a8a8a; margin-left: auto; }
.thumb { width: 761px; height: 8px; border-radius: 4px; background: #868686; margin-left: 11px; }
.sheettabs { height: 40px; flex: none; border-bottom: 1px solid #dcdcdc; display: flex; align-items: center; padding: 0 0 1px 15px; }
.sr { margin: 0 26px 0 29px; }
.sheettabs b { height: 38px; line-height: 34px; margin: 1px 21px 0 22px; width: 50px; font-size: 16px; font-weight: 600; border-bottom: 3px solid #107c41; color: #444; white-space: nowrap; letter-spacing: -0.030em; }
.status { height: 25px; flex: none; background: #fff; display: flex; align-items: center; padding: 5px 0 0 38px; font-size: 13.800px; color: #444; white-space: nowrap; }
.status span { letter-spacing: 0; }
.ws { width: 1501px; }
.gf { width: 179px; margin-left: 50px; }
.zm { margin: -3px 16px 0 39px; }
.status .pc { width: 36px; margin-right: 11px; letter-spacing: -0.040em; }
.pc + svg { margin-top: -3px; }

/* taskbar */
.taskbar { height: 72px; position: relative; z-index: 3; border-top: 1px solid #b0b0b0; background: linear-gradient(90deg, #dadada 0, #dadada 38%, #e1e1ef 47%, #dbe4f1 52%, #d9dfe8 57%, #dadada 75%); display: flex; align-items: center; padding-left: 28px; color: #222; font-size: 17px; line-height: 24px; }
.weather { width: 514px; display: flex; position: relative; align-items: center; }
.weather > svg { margin-top: -8px; }
.count { position: absolute; left: 19px; top: -3px; width: 24px; height: 24px; border-radius: 50%; background: #c42b1c; color: #fff; text-align: center; line-height: 23px; font-size: 15px; }
.wt { margin: -2px 0 0 8px; letter-spacing: 0; }
.wt em { color: #666; letter-spacing: 0; }
.start { width: 35px; height: 35px; margin-right: 22px; }
.search { width: 326px; height: 46px; border-radius: 23px; background: linear-gradient(90deg, #f7f7f7, #f3f4f9); border: 1px solid #c5c5c9; border-bottom-width: 2px; display: flex; align-items: center; padding-left: 15px; margin-right: 21px; font-size: 18px; color: #555; }
.search > span:nth-child(2) { width: 192px; margin-left: 14px; }
.brief { width: 78px; height: 40px; border-radius: 20px; background: #e3e5ea; display: flex; align-items: center; justify-content: center; }
.tview { width: 36px; height: 34px; margin-right: 14px; }
.app { width: 66px; height: 57px; position: relative; display: flex; align-items: center; justify-content: center; }
.app::after { content: ""; position: absolute; bottom: 0; left: 29px; width: 9px; height: 5px; border-radius: 3px; background: #7b7b7b; }
.pb { position: absolute; width: 24px; height: 24px; right: 7px; top: 0; border-radius: 50%; color: #fff; font-size: 13px; line-height: 24px; text-align: center; }
.pa { background: #2f6b1d; }
.pp { background: linear-gradient(150deg, #b8b0a8 0, #d9a17c 35%, #26384a 52%, #111 100%); }
.pk { background: #13a10e; display: flex; align-items: center; justify-content: center; }
.tlapp { width: 56px; background: #efefef; border: 1px solid #e6e6e6; border-radius: 6px; margin-left: 6px; }
.tlapp b { width: 36px; height: 36px; background: #000308; color: #0a71c7; font: 300 26px/35px "Lato", sans-serif; text-align: center; letter-spacing: 0; }
.tlapp::after { left: 15px; width: 25px; background: #0078d4; }
.trayc { margin-left: 142px; }
.lang { width: 60px; margin-left: 18px; text-align: center; line-height: 23px; }
.wifi { margin-left: 15px; }
.vol { margin-left: 11px; }
.bat { margin-left: 10px; }
.clock { width: 117px; text-align: right; font-size: 17.500px; letter-spacing: 0; margin-top: -2px; }
.bell { margin-left: 13px; }

/* TeamLogger window */
.shade { position: absolute; left: 558px; top: 71px; width: 804px; height: 865px; border-radius: 10px; box-shadow: 0 24px 44px rgba(0,0,0,.42), 0 0 3px rgba(0,0,0,.6); clip-path: inset(-60px -80px -72px -80px); }
.win { position: absolute; left: 558px; top: 71px; width: 804px; height: 865px; border-radius: 10px; overflow: hidden; background: #fff; display: flex; flex-direction: column; color: #111; box-shadow: 0 0 0 1px rgba(120,120,120,.5); }
.w-title { height: 35px; flex: none; background: linear-gradient(90deg, #f1f4f8, #eaf1fa 50%, #f3f3f8); display: flex; align-items: center; padding-left: 3px; font-size: 17px; padding-bottom: 2px; }
.w-ic { width: 24px; height: 24px; background: #000; color: #0a558e; font: 300 17px/24px "Lato", sans-serif; text-align: center; }
.w-name { margin-left: 6px; flex: 1; letter-spacing: -0.006em; }
.w-title svg { margin-right: 22px; }
.w-head { height: 50px; flex: none; background: #f7f7f7; border-bottom: 1.500px solid #a9a9a9; display: flex; align-items: flex-start; padding: 6px 0 0 353px; color: #3880ff; white-space: nowrap; }
.w-head > svg { margin-top: 8px; }
.w-head b { width: 157px; margin-left: 6px; font-size: 18.500px; line-height: 45px; letter-spacing: -0.028em; }
.wb { height: 37px; background: #3880ff; border: 1px solid #1b66f0; border-radius: 2px; color: #fff; font-size: 14px; display: flex; align-items: center; justify-content: center; gap: 6px; letter-spacing: -0.010em; padding-top: 1px; }
.wb1 { width: 124px; margin-right: 11px; }
.wb2 { width: 87px; margin-right: 6px; }
.wb3 { width: 30px; }
.w-gap { height: 8px; flex: none; border-bottom: 1px solid #ddd; }
.w-stats { height: 61px; flex: none; margin: 0 6px; border-bottom: 1px solid #ddd; display: flex; text-align: center; padding-top: 7px; white-space: nowrap; }
.w-stats p { margin: 0; font-size: 22px; line-height: 30px; letter-spacing: -0.018em; }
.w-stats small { display: block; font-size: 15px; line-height: 13px; letter-spacing: -0.008em; }
.s1 { width: 324px; }
.s2 { width: 216px; color: green; font-weight: 700; }
.s2 p { letter-spacing: -0.020em; }
.s2 small { letter-spacing: -0.016em; }
.s3 { width: 250px; color: red; }
.s3 p { letter-spacing: -0.008em; }
.w-stats .rec { color: #00f; text-decoration: underline; font-size: 14.500px; padding-top: 4px; letter-spacing: 0; }
.w-proj { height: 78px; flex: none; margin: 11px 17px 0; background: green; border-radius: 5px; color: #fff; font-size: 20px; line-height: 33px; padding-top: 8px; text-align: center; display: flex; flex-direction: column; }
.w-proj b { letter-spacing: -0.023em; }
.w-proj span { letter-spacing: -0.032em; }
.w-btns { height: 76px; flex: none; margin: 0 6px; border-bottom: 1px solid #ddd; display: flex; padding: 23px 0 0 231px; }
.info { width: 58px; height: 41px; border: 1px solid #b5b5b5; border-radius: 2px; background: #f6f6f6; display: flex; align-items: center; justify-content: center; padding-right: 4px; margin-right: 5px; }
.red { height: 41px; border: 1px solid #e02c20; border-radius: 2px; background: #f04a3c; color: #fff; display: flex; align-items: center; justify-content: center; gap: 4px; font-weight: 700; font-size: 17.500px; white-space: nowrap; letter-spacing: -0.032em; }
.red i { width: 15px; height: 14px; background: #fff; margin-top: -1px; }
.r1 { width: 140px; margin-right: 4px; }
.r2 { width: 123px; }
.w-timeout { height: 50px; flex: none; line-height: 47px; text-align: center; color: #ff8c00; font-weight: 700; font-size: 18px; letter-spacing: -0.033em; }
.w-conn { height: 61px; flex: none; margin: 0 4px 0 5px; border: 1px solid #ddd; text-align: center; line-height: 59px; color: red; font-weight: 700; font-size: 18px; }
.w-conn span, .w-conn u { letter-spacing: -0.026em; }
.w-tabs { height: 78px; flex: none; border-bottom: 1px solid #d5d5d5; display: flex; align-items: center; padding: 0 0 8px 109px; font-size: 15px; white-space: nowrap; }
.w-tabs > span { height: 35px; line-height: 34px; text-align: center; border: 1px solid #ddd; letter-spacing: -0.010em; }
.k1 { width: 134px; background: #3c6edb; color: #fff; }
.w-tabs .k2 { width: 184px; border-left: 0; }
.w-tabs .k3 { width: 130px; border-left: 0; }
.w-tabs .k4 { width: 58px; border: 0; padding-left: 6px; }
.w-tabs .k5 { width: 80px; height: 39px; border: 1px solid #666; display: flex; align-items: center; justify-content: space-between; padding: 0 8px 0 11px; --sw: 2; }
.w-list { flex: 1; display: flex; }
.w-main { width: 779px; }
.w-h { height: 42px; background: #f4f4f4; border-bottom: 1px solid #ddd; padding-left: 18px; line-height: 44px; font-size: 17.500px; letter-spacing: -0.004em; }
.w-search { height: 52px; background: #a9a9a9; display: flex; align-items: center; padding-left: 17px; }
.w-search span { width: 737px; height: 38px; margin-left: 6px; border: 1.500px solid #777; border-radius: 12px; background: #fff; color: #a9a9a9; font-weight: 700; font-style: italic; font-size: 18.500px; text-align: center; line-height: 40px; padding-right: 28px; letter-spacing: 0.015em; white-space: nowrap; }
.w-row { height: 60px; border-bottom: 1px solid #ddd; display: flex; justify-content: space-between; padding: 0 44px 0 18px; line-height: 61px; font-size: 17px; color: #444; }
.w-row span { letter-spacing: -0.007em; }
.w-row i { color: #aaa; font: 700 27px/60px "Liberation Serif", serif; }
.w-note { height: 104px; border-bottom: 1px solid #ddd; display: flex; flex-direction: column; align-items: center; padding-top: 31px; font-size: 19.500px; line-height: 22px; color: #777; }
.w-note span { letter-spacing: -0.012em; }
.w-note u { color: #4169e1; letter-spacing: -0.005em; }
.w-scroll { width: 25px; background: #f1f1f1; display: flex; flex-direction: column; align-items: center; justify-content: space-between; padding: 10px 0 7px; }
.w-scroll i { border-left-width: 6px; border-right-width: 6px; }
```
FILE: sheet.js
```js
// Attendance rows: [number, name, row colour, cells B C F G H, cells AA..AF, name colour]
const rows = [
  [105, 'POONAM RAWAT', 'peach', 'P P P P P', 'P P LEAVE:peach P P'],
  [106, 'AAKSHI THAKUR', 'green', 'P P P P P', 'P P P P P'],
  [107, 'ADITYA SHARMA', 'pink', 'P P P P P', 'p P P P LEAVE'],
  [108, 'VISHWAJEET SHARMA', 'blue', 'P P P P P', 'p P P P LEAVE'],
  [109, 'VARIS RAJAK', 'green', 'P LEAVE P P P', 'P:orange H._DAY P P P'],
  [110, 'ANMOL SINGH', 'peach', 'P P P 0M_LATE:royal P', 'P P P P P', 'mint'],
  [111, 'SUNDAR SOREN', 'rose', 'P P P P P', 'X:cyan X:cyan X:cyan X:cyan X:cyan X:cyan :cyan'],
  [112, 'SHASHANK MISHRA', 'green', 'P P H._DAY P P', 'P P P P H._DAY'],
  [113, 'ANJALI SHARMA', 'lilac', 'P P P P P', 'P P P P LEAVE'],
  [114, 'ASHMITA SHRIVAS', 'blush', 'P P P P P', 'P P LEAVE P P', 'apricot'],
  [115, 'ANUSHIKA MISHRA', 'ice', 'LEAVE P P P P', 'P P P P P'],
  [116, 'NANCY VERMA', 'green', 'P P P P P', 'P P P LEAVE P'],
  [117, 'GOVIND MARKED', 'blush', 'P P LEAVE P P', 'LEAVE P P P P'],
  [118, 'BISHOY MORGAN', 'rose', 'P P P P P', 'H.DAY P P P P'],
  [119, 'MAHAK VAID', 'red-c', 'P P P P P', 'P P P LEAVE:red-c H._DAY:red-c'],
  [120, 'AKHIL BHARADWAJ', 'sky', 'P P P P H_DAY', 'P P P P P', 'azure'],
  [121, 'RAHUL DUA', 'green', 'P P P P P', 'P P P P P'],
  [122, 'ROHIT', 'lilac', 'P P P P P', 'P P P P P'],
  [123, 'MOHIT SINGHAL BHIST', 'blue', 'P H_DAY LEAVE P P', 'P P P P P'],
  [124, 'RAHUL KHUSHWAHA', 'green', 'P P P Late:leaf P', 'P LEAVE H.DAY P LEAVE'],
  [125, 'DEVANSH AGARWAL', 'lilac', 'P P P P P', 'P P P P P'],
  [126, 'NIYATI VIBHUTI', 'red-c', 'P P P P P', 'X X X X X X'],
  [127, 'POOJA HABIB', 'peach', 'P P P P P', 'P P P P P'],
  [128, 'ANSH KAPILA', 'green', 'P P P P P', 'P P P P P'],
  [129, 'SATVIK GULHIAR', 'red-c', 'P P P P P', 'X X X X'],
  [130, 'BUTALA SAKSHI', 'lilac', 'P P P P P', 'P P P LEAVE P'],
  [131, 'ASHMEET KAUR', 'sky', 'P P P P P', 'P P P P P'],
];
const sheet = document.getElementById('sheet');
function put(cls, text, row, col) {
  const d = document.createElement('div');
  d.className = cls;
  d.textContent = text;
  if (row) d.style.gridArea = row + ' / ' + col;
  sheet.append(d);
  return d;
}
put('corner', '', 1, 1);
['A', 'B', 'C', 'D', 'E', 'F', 'G', 'H', '', 'Y', 'Z', 'AA', 'AB', 'AC', 'AD', 'AE', 'AF', 'AG']
  .forEach((t, i) => put('col', t, 1, i + 2));
put('num first', '104', 2, 1);
['DATE', '1-Aug', '2-Aug', '3-Aug', '4-Aug', '5-Aug', '6-Aug', '7-Aug', '', '24-Aug', '25-Aug', '26-Aug', '27-Aug', '28-Aug', '29-Aug', '30-Aug', '', '']
  .forEach((t, i) => put('cell head', t, 2, i + 2));
const fills = { 'LEAVE': 'yellow', 'H._DAY': 'orange', 'H.DAY': 'orange', 'H_DAY': 'orange' };
const leftCols = [3, 4, 7, 8, 9];
rows.forEach(([num, name, colour, left, right, nameColour], r) => {
  const line = r + 3;
  const extra = num === 105 ? ' tall' : num === 131 ? ' last' : '';
  put('num' + extra, num, line, 1);
  put('cell ' + (nameColour || colour) + extra, name, line, 2);
  const cell = (token, col) => {
    const [text, fill] = (token || '').split(':');
    let cls = 'cell ' + (fill || fills[text] || colour) + extra;
    if (text === 'H_DAY') cls += ' low';
    if (text === '0M_LATE') cls += ' left';
    if (num === 111 && col === 3) cls += ' shift';
    if (col === 19) cls += ' noedge';
    put(cls, text.replace('_', ' '), line, col);
  };
  left.split(' ').forEach((t, i) => cell(t, leftCols[i]));
  const rt = right.split(' ');
  for (let i = 0; i < 7; i++) cell(rt[i], 13 + i);
});
put('weekend first', 'WEEKEND');
put('weekend second', 'WEEKEND');
put('vscroll', '').innerHTML = '<i class="tri-u"></i><span></span><i class="tri-d"></i>';
```
